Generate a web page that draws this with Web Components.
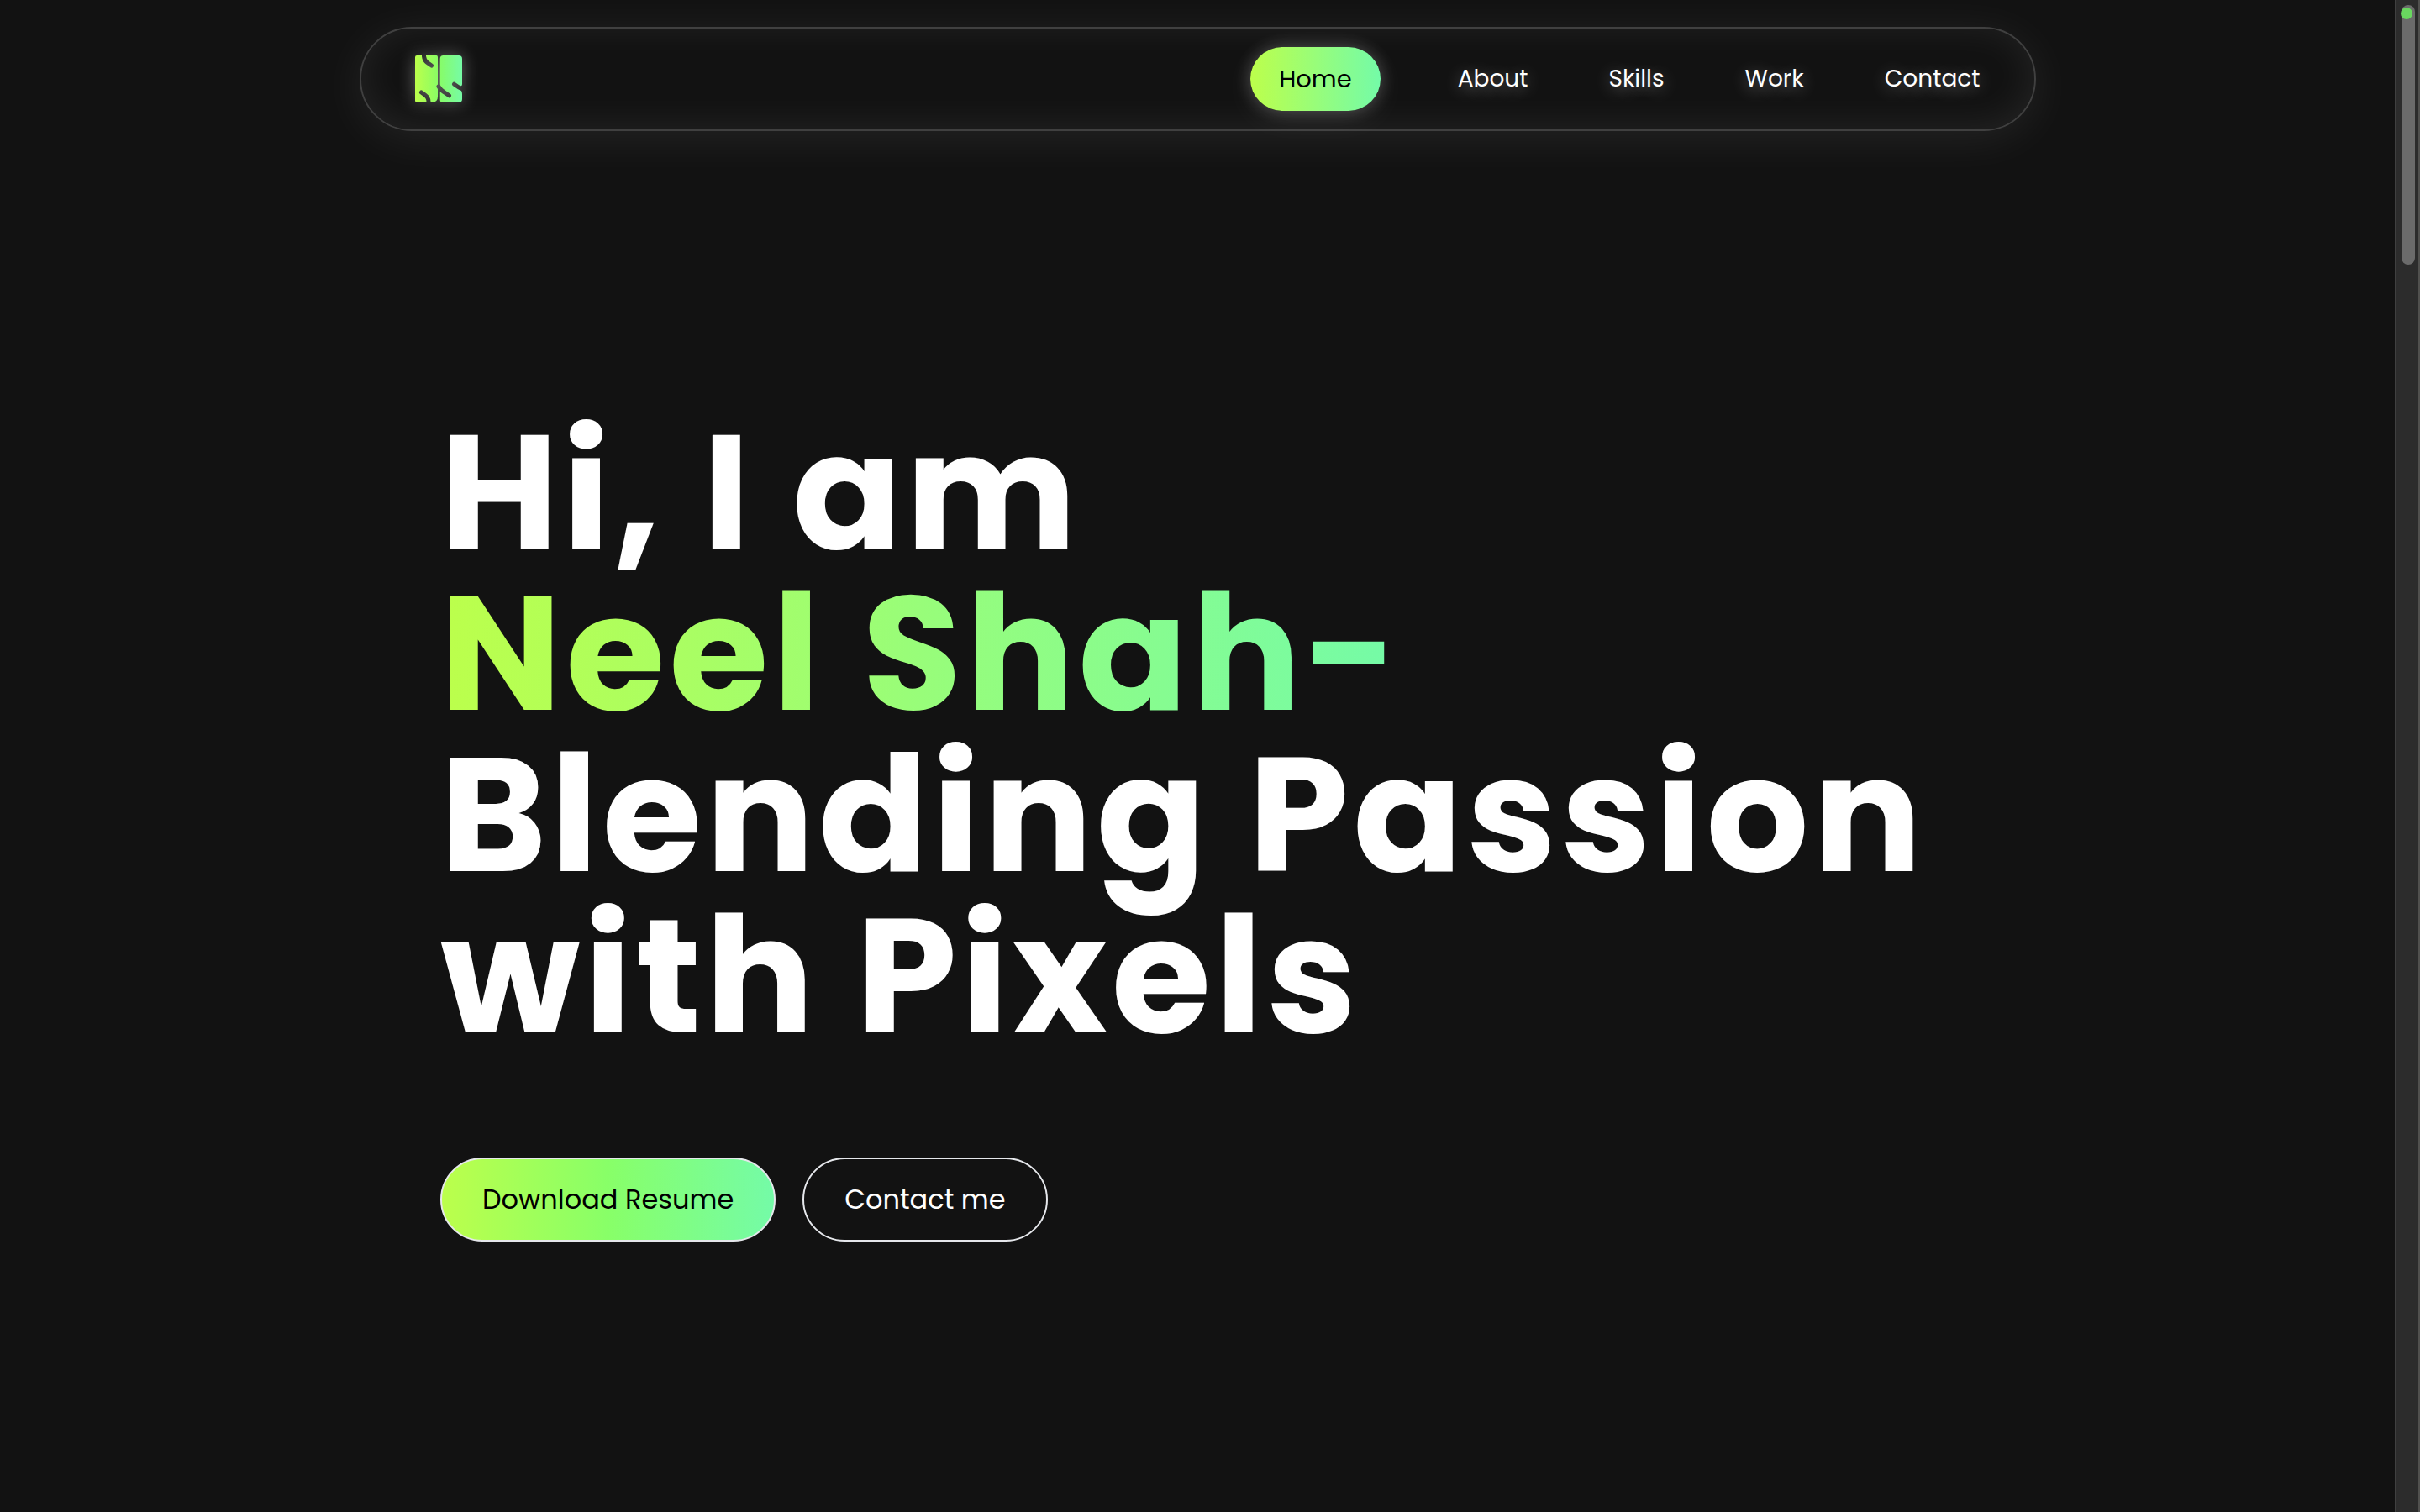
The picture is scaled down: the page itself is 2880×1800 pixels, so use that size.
<!DOCTYPE html>
<html lang="en">
<head>
<meta charset="utf-8">
<title>Neel Shah</title>
<style>
  body {
    margin: 0;
    background: #121212;
    color: #fff;
    font-family: Poppins, Inter, "Open Sans", sans-serif;
  }
</style>
</head>
<body>
<page-shell>
  <site-nav>
    <brand-logo slot="brand"></brand-logo>
    <nav-link href="#home" active>Home</nav-link>
    <nav-link href="#about">About</nav-link>
    <nav-link href="#skills">Skills</nav-link>
    <nav-link href="#work">Work</nav-link>
    <nav-link href="#contact">Contact</nav-link>
  </site-nav>
  <hero-banner>
    <span slot="greeting">Hi, I am</span>
    <span slot="name">Neel Shah-</span>
    <span slot="tagline">Blending Passion with Pixels</span>
    <pill-button slot="actions" primary>Download Resume</pill-button>
    <pill-button slot="actions">Contact me</pill-button>
  </hero-banner>
  <scroll-rail slot="rail"></scroll-rail>
</page-shell>

<script>
const define = (name, html) => {
  const template = document.createElement('template');
  template.innerHTML = html;
  customElements.define(name, class extends HTMLElement {
    constructor() {
      super();
      this.attachShadow({ mode: 'open' }).append(template.content.cloneNode(true));
    }
    connectedCallback() {
      const link = this.shadowRoot.querySelector('a');
      if (link && this.hasAttribute('href')) link.href = this.getAttribute('href');
    }
  });
};

define('page-shell', `
  <style>
    :host { display: flex; height: 100vh; overflow: hidden; }
    main { flex: 1; min-width: 0; }
  </style>
  <main><slot></slot></main>
  <slot name="rail"></slot>`);

define('site-nav', `
  <style>
    :host { display: block; padding-top: 32px; }
    nav {
      box-sizing: border-box;
      width: 70%;
      margin: 0 auto;
      padding: 22px 32px 22px 64px;
      display: flex;
      align-items: center;
      justify-content: space-between;
      border: 2px solid #404040;
      border-radius: 64px;
      box-shadow: 0 8px 56px rgba(255,255,255,.08), inset 0 -4px 48px rgba(255,255,255,.08);
    }
    .links { display: flex; gap: 32px; }
  </style>
  <nav aria-label="Main">
    <slot name="brand"></slot>
    <div class="links"><slot></slot></div>
  </nav>`);

define('brand-logo', `
  <style>
    :host { display: block; }
    svg { display: block; width: 56px; height: 56px; filter: drop-shadow(0 0 10px rgba(255,255,255,.35)); }
  </style>
  <svg viewBox="0 0 56 56" role="img" aria-label="NS">
    <defs>
      <linearGradient id="g">
        <stop offset="0" stop-color="#bcff4b"/>
        <stop offset=".5" stop-color="#88fc65"/>
        <stop offset="1" stop-color="#76fba6"/>
      </linearGradient>
      <mask id="m" maskUnits="userSpaceOnUse" x="0" y="0" width="56" height="56">
        <rect width="56" height="56" fill="#fff"/>
        <g fill="none" stroke="#000" stroke-width="5" stroke-linecap="round" stroke-linejoin="round">
          <path d="M10.5-3V1Q11 6 14.500 8.500L19.500 12"/>
          <path d="M7.500 44L12 47.200Q16 50 16 55V59"/>
          <path d="M46.500 34.200L52 38Q55 40 59 40"/>
          <path d="M40.500 47.800L35 44Q31 42 28 37"/>
        </g>
      </mask>
    </defs>
    <path mask="url(#m)" fill="url(#g)" d="M2 0H25.500Q27 0 27 2V49Q27 56 20 56H2Q0 56 0 54V2Q0 0 2 0ZM33.500 0H52Q56 0 56 4V34Q56 36.500 53.500 36.500L52 38Q56 42 56 46V52Q56 56 52 56H32.500Q29.700 56 29.700 53V4Q29.700 0 33.500 0Z"/>
  </svg>`);

define('nav-link', `
  <style>
    :host { display: block; }
    :host([active]) { margin-right: 28px; }
    a {
      display: block;
      padding: 18px 32px;
      border-radius: 40px;
      font-size: 28px;
      line-height: 40px;
      font-weight: 400;
      color: #fff;
      text-decoration: none;
      text-shadow: 0 4px 20px rgba(255,255,255,.4);
    }
    :host([active]) a {
      padding: 18px 34px;
      font-size: 29px;
      color: #000;
      text-shadow: none;
      background: linear-gradient(90deg, #bcff4b, #74fba8);
      box-shadow: 0 0 20px rgba(255,255,255,.24), 0 8px 40px rgba(255,255,255,.08);
    }
  </style>
  <a><slot></slot></a>`);

define('hero-banner', `
  <style>
    :host { display: block; width: 1802px; max-width: 90%; margin: 0 auto; padding-top: 334px; }
    h1 { margin: 0; font-size: 192px; line-height: 192px; font-weight: 700; letter-spacing: 0.025em; }
    .line { display: block; }
    .name {
      display: block;
      width: fit-content;
      color: transparent;
      background: linear-gradient(90deg, #bcff4b, #74fba8);
      -webkit-background-clip: text;
      background-clip: text;
    }
    .actions { display: flex; gap: 32px; margin-top: 120px; }
  </style>
  <h1>
    <span class="line"><slot name="greeting"></slot></span>
    <span class="name"><slot name="name"></slot></span>
    <span class="line"><slot name="tagline"></slot></span>
  </h1>
  <div class="actions"><slot name="actions"></slot></div>`);

define('pill-button', `
  <style>
    :host { display: block; }
    button {
      display: block;
      margin: 0;
      padding: 24px 48px;
      border: 2px solid #e5e7eb;
      border-radius: 50px;
      background: transparent;
      color: #fff;
      font: inherit;
      font-size: 32px;
      line-height: 48px;
      white-space: nowrap;
    }
    :host([primary]) button {
      color: #000;
      background: linear-gradient(90deg, #bcff4b, #88ff68 50%, #74fba8) border-box;
    }
  </style>
  <button type="button"><slot></slot></button>`);

define('scroll-rail', `
  <style>
    :host {
      position: relative;
      box-sizing: border-box;
      width: 30px;
      padding: 6px 4px 0 6px;
      background: #2c2c2c;
      border-left: 2px solid #404040;
      border-right: 2px solid #50504e;
    }
    .thumb { width: 16px; height: 309px; border-radius: 8px; background: #6b6b6b; }
    .dot {
      position: absolute;
      left: 5px;
      top: 9px;
      width: 14px;
      height: 14px;
      border-radius: 50%;
      background: #69d75f;
    }
  </style>
  <div class="thumb"></div>
  <div class="dot"></div>`);
</script>
</body>
</html>
